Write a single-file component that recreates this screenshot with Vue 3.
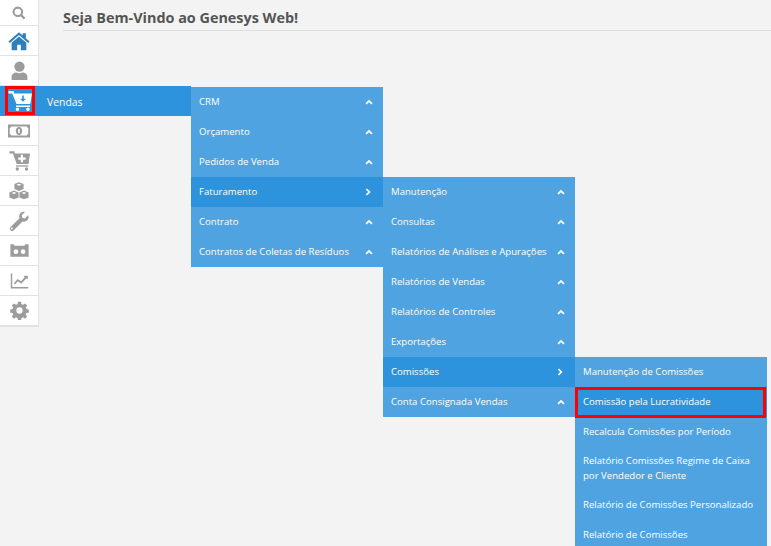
<template>
  <div class="page">
    <nav class="sidebar">
      <a
        v-for="item in sideItems"
        :key="item.name"
        class="sideItem"
        :class="[item.name, { open: item.name === 'cart' }]"
      >
        <span class="iconBox" :class="{ marked: item.name === 'cart' }">
          <svg :width="item.size" :height="item.size" viewBox="0 0 24 24" :class="item.tone">
            <path v-for="(d, i) in item.paths" :key="i" :d="d" />
          </svg>
        </span>
        <span v-if="item.name === 'cart'" class="sideLabel">Vendas</span>
      </a>
      <ul class="menu level1">
        <li v-for="row in firstLevel" :key="row.text" :class="{ active: row.sub }">
          <span class="rowText">{{ row.text }}</span>
          <svg class="chevron" width="8" height="8" viewBox="0 0 8 8">
            <path v-if="row.sub" d="M2 .6 5.6 4 2 7.4.9 6.3 3.2 4 .9 1.7z" />
            <path v-else d="M.4 5.2 4 1.8l3.6 3.4-1.3 1.2L4 4.3 1.7 6.4z" />
          </svg>
          <ul v-if="row.sub" class="menu level2">
            <li v-for="second in secondLevel" :key="second.text" :class="{ active: second.sub }">
              <span class="rowText">{{ second.text }}</span>
              <svg class="chevron" width="8" height="8" viewBox="0 0 8 8">
                <path v-if="second.sub" d="M2 .6 5.6 4 2 7.4.9 6.3 3.2 4 .9 1.7z" />
                <path v-else d="M.4 5.2 4 1.8l3.6 3.4-1.3 1.2L4 4.3 1.7 6.4z" />
              </svg>
              <ul v-if="second.sub" class="menu level3">
                <li
                  v-for="third in thirdLevel"
                  :key="third"
                  :class="{ active: third === 'Comissão pela Lucratividade' }"
                >
                  <span class="rowText">{{ third }}</span>
                </li>
              </ul>
            </li>
          </ul>
        </li>
      </ul>
    </nav>
    <main class="content">
      <h1 class="title">Seja Bem-Vindo ao Genesys Web!</h1>
    </main>
  </div>
</template>

<script setup>
const sideItems = [
  {
    name: 'search',
    tone: 'grey',
    size: 14,
    paths: ['M10 1a9 9 0 1 0 4.8 16.6L20.2 23l2.8-2.8-5.4-5.400A9 9 0 0 0 10 1zm0 3.500a5.500 5.500 0 1 1 0 11 5.500 5.500 0 0 1 0-11z']
  },
  {
    name: 'home',
    tone: 'blue',
    size: 22,
    paths: ['M12 2.500 .5 12.500l1.500 1.700L12 5.500l10 8.700 1.500-1.700-4-3.500V3.500h-3.500V6z', 'M4 14 12 7l8 7v8h-6v-6h-4v6H4z']
  },
  {
    name: 'user',
    tone: 'grey',
    size: 19,
    paths: ['M12 .5a6.500 6.500 0 1 1 0 13 6.500 6.500 0 0 1 0-13z', 'M2 24v-4c0-3.500 3-5.500 6-5.500 2.500 1.300 5.500 1.300 8 0 3 0 6 2 6 5.500v4z']
  },
  {
    name: 'cart',
    tone: 'white',
    size: 24,
    paths: [
      'M.5 2h5l.8 2.500H24l-1.700 10.500H8.500L4.200 4.500H.5zM14.200 6.500v3.200h-2.200l3 3 3-3h-2.200V6.500z',
      'M8 16.500h14V18H8z',
      'M9.500 18.500a1.800 1.800 0 1 1 0 3.600 1.800 1.800 0 0 1 0-3.600zM20 18.500a1.800 1.800 0 1 1 0 3.600 1.800 1.800 0 0 1 0-3.600z'
    ]
  },
  {
    name: 'money',
    tone: 'grey',
    size: 24,
    paths: ['M1 5.500h22v13H1zM4 7.500c0 .9-.6 1.500-1.300 1.500v6c.7 0 1.300.6 1.300 1.500h16c0-.9.6-1.500 1.300-1.500V9c-.7 0-1.300-.6-1.300-1.500zM12 8c2 0 3.200 1.800 3.200 4s-1.200 4-3.200 4-3.200-1.800-3.200-4 1.200-4 3.200-4zm-.8 2v4h1.600v-4z']
  },
  {
    name: 'cartAdd',
    tone: 'grey',
    size: 21,
    paths: [
      'M.5 1.500h5.500l.8 2.500H24l-1.700 12H8.800L4.500 4H.5zM13.500 5.500v3h-3v2.500h3v3H16v-3h3V8.500h-3v-3z',
      'M8 17.500h14V19H8z',
      'M9.500 19.800a1.900 1.900 0 1 1 0 3.800 1.900 1.900 0 0 1 0-3.800zM20 19.800a1.900 1.900 0 1 1 0 3.800 1.900 1.900 0 0 1 0-3.800z'
    ]
  },
  {
    name: 'cubes',
    tone: 'grey',
    size: 20,
    paths: [
      'M12 1.500 17.500 3.700v6L12 12 6.500 9.700v-6zM12 3.300 9 4.500l3 1.100 3-1.100z',
      'M6 11.500 11.500 13.700v6L6 22 .5 19.700v-6zM6 13.300 3 14.500l3 1.100 3-1.100z',
      'M18 11.500l5.500 2.200v6L18 22l-5.500-2.300v-6zM18 13.300l-3 1.200 3 1.100 3-1.100z'
    ]
  },
  {
    name: 'wrench',
    tone: 'grey',
    size: 20,
    paths: ['M23 5 19 9l-3-.8L15.200 5.200l4-4c-3.500-1-7 1.500-7 5.200 0 .8.1 1.500.4 2.200L1.500 19.600A2.800 2.800 0 0 0 5.400 23.500L16.300 12.500c3.800 1.300 7.500-1.700 7.200-5.700-.1-.7-.2-1.300-.5-1.800zM3.400 22.300a1.200 1.200 0 1 1 0-2.400 1.200 1.200 0 0 1 0 2.400z']
  },
  {
    name: 'tape',
    tone: 'grey',
    size: 19,
    paths: ['M.5 4H5c.1 1.200.7 2 2 2h10c1.300 0 1.900-.8 2-2h4.500v16H.5zM7.500 10.500a3 3 0 1 0 0 6 3 3 0 0 0 0-6zM16.500 10.500a3 3 0 1 0 0 6 3 3 0 0 0 0-6z']
  },
  {
    name: 'chart',
    tone: 'grey',
    size: 19,
    paths: ['M1 3h1.800v17.200H23V22H1z', 'M5 15.500 9.500 10l4.500 3 4.700-5.500-1.700-1.500H22.500V11L20.700 9.300 14.300 16l-4.500-3-3.500 4z']
  },
  {
    name: 'gear',
    tone: 'grey',
    size: 19,
    paths: ['M10 1h4l.5 3 1.900.8 2.500-1.800 2.800 2.800-1.800 2.500.8 1.900 3 .5v4l-3 .5-.8 1.900 1.800 2.500-2.800 2.800-2.500-1.800-1.900.8-.5 3h-4l-.5-3-1.900-.8-2.500 1.800-2.800-2.800 1.800-2.500-.8-1.900-3-.5v-4l3-.5.8-1.900-1.800-2.500 2.800-2.800 2.500 1.800 1.900-.8zM12 8a4 4 0 1 0 0 8 4 4 0 0 0 0-8z']
  }
]

const firstLevel = [
  { text: 'CRM' },
  { text: 'Orçamento' },
  { text: 'Pedidos de Venda' },
  { text: 'Faturamento', sub: true },
  { text: 'Contrato' },
  { text: 'Contratos de Coletas de Resíduos' }
]

const secondLevel = [
  { text: 'Manutenção' },
  { text: 'Consultas' },
  { text: 'Relatórios de Análises e Apurações' },
  { text: 'Relatórios de Vendas' },
  { text: 'Relatórios de Controles' },
  { text: 'Exportações' },
  { text: 'Comissões', sub: true },
  { text: 'Conta Consignada Vendas' }
]

const thirdLevel = [
  'Manutenção de Comissões',
  'Comissão pela Lucratividade',
  'Recalcula Comissões por Período',
  'Relatório Comissões Regime de Caixa por Vendedor e Cliente',
  'Relatório de Comissões Personalizado',
  'Relatório de Comissões'
]
</script>

<style>
html,
body {
  margin: 0;
  padding: 0;
  background: #f3f3f3;
  overflow: hidden;
}
</style>

<style scoped>
.page {
  display: flex;
  height: 546px;
  overflow: hidden;
  background: #f3f3f3;
  font-family: "Open Sans", "Liberation Sans", sans-serif;
}

.sidebar {
  position: relative;
  flex: none;
  width: 38px;
  align-self: flex-start;
  background: #fff;
  border-right: 1px solid #e2e2e2;
  border-bottom: 1px solid #e2e2e2;
}

.sideItem {
  display: flex;
  align-items: center;
  height: 29px;
  border-bottom: 1px solid #e2e2e2;
}

.sideItem.search {
  height: 25px;
}

.sideItem.open {
  position: relative;
  z-index: 1;
  width: 191px;
  height: 30px;
  background: #2d93dc;
  border-bottom: none;
}

.iconBox {
  flex: none;
  display: flex;
  align-items: center;
  justify-content: center;
  width: 38px;
  height: 100%;
  box-sizing: border-box;
}

.iconBox.marked {
  align-self: flex-start;
  width: 30px;
  height: 29px;
  margin-left: 5px;
  margin-right: 4px;
  border: 3px solid #f00;
}

.iconBox svg {
  display: block;
  flex: none;
  fill-rule: evenodd;
}

.grey {
  fill: #9c9c9c;
}

.blue {
  fill: #2d7fbd;
}

.white {
  fill: #fff;
}

.sideLabel {
  margin-left: 8px;
  padding-top: 1px;
  font-size: 10.4px;
  color: #fff;
}

.menu {
  position: absolute;
  width: 192px;
  margin: 0;
  padding: 0;
  list-style: none;
  background: #4fa3e0;
}

.level1 {
  z-index: 2;
  top: 87px;
  left: 191px;
}

.level2,
.level3 {
  top: 0;
  left: 100%;
}

.menu li {
  position: relative;
  display: flex;
  align-items: center;
  justify-content: space-between;
  min-height: 30px;
  padding: 6px 10px 7px 8px;
  box-sizing: border-box;
  font-size: 9.6px;
  line-height: 15px;
  color: #fff;
}

.menu li.active {
  background: #2d93dc;
}

.level3 li.active::after {
  content: "";
  position: absolute;
  top: 0;
  left: 0;
  right: 1px;
  bottom: -1px;
  border: 3px solid #f00;
  pointer-events: none;
}

.chevron {
  flex: none;
  fill: #fff;
}

.content {
  flex: 1;
  min-width: 0;
  padding: 10px 0 0 24px;
}

.title {
  margin: 0;
  padding-bottom: 4px;
  font-size: 14.4px;
  font-weight: 700;
  line-height: 16px;
  color: #555;
  border-bottom: 1px solid #dedede;
}
</style>
